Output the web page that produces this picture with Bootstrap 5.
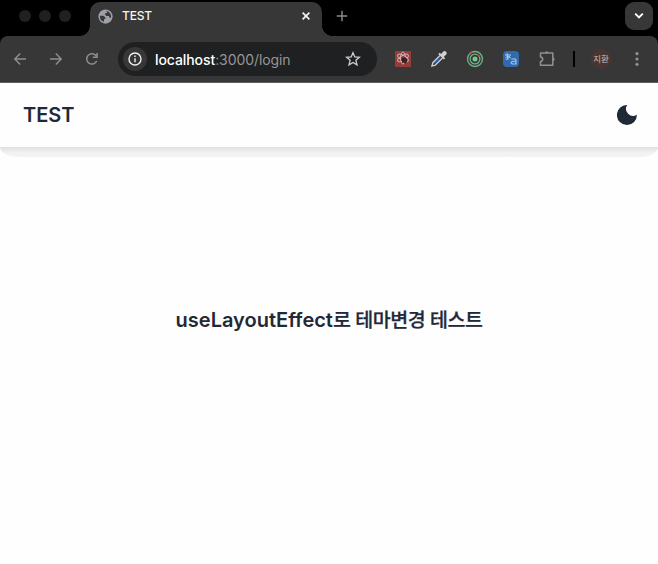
<!DOCTYPE html>
<html lang="ko">
<head>
<meta charset="utf-8">
<meta name="viewport" content="width=device-width, initial-scale=1">
<title>TEST</title>
<link href="https://cdn.jsdelivr.net/npm/bootstrap@5.3.0/dist/css/bootstrap.min.css" rel="stylesheet">
<script defer src="https://cdn.jsdelivr.net/npm/bootstrap@5.3.0/dist/js/bootstrap.bundle.min.js"></script>
<style>
body{height:564px;font-family:Inter,"Noto Sans CJK KR",sans-serif;color:#1f2937;background:#fefefe}
svg{display:block;flex:none}
.tabstrip{height:36px;background:#000;padding:2px 5px 0 19px}
.light{width:12px;height:12px;background:#202022}
.lights{gap:8px;width:71px;padding-top:8px}
.browser-tab{width:232px;height:34px;background:#373737;border-radius:10px 10px 0 0;padding:0 10px 6px 8px;color:#f4f4f4;font-size:12px;font-weight:500}
.browser-tab::before,.browser-tab::after{content:"";position:absolute;bottom:0;width:10px;height:10px}
.browser-tab::before{left:-10px;background:radial-gradient(circle at 0 0,#000 9.5px,#373737 10px)}
.browser-tab::after{right:-10px;background:radial-gradient(circle at 100% 0,#000 9.5px,#373737 10px)}
.tab-name{margin-left:9px;letter-spacing:-.15px}
.new-tab{margin:8px 0 0 14px}
.tab-search{width:28px;height:28px;border-radius:9px;background:#373737}
.toolbar-wrap{background:#000}
.toolbar{height:47px;background:#373737;border-bottom:1px solid #606060;border-radius:8px 8px 0 0;padding-left:12px;color:#8f8f8f}
.nav-icons{gap:20px;width:106px}
.address{width:259px;height:34px;border-radius:17px;background:#1f2022;padding:0 16px 0 5px;font-size:14px;color:#969696}
.info{width:24px;height:24px;background:#373737}
.url{margin-left:8px;letter-spacing:-.08px}
.url span{color:#fff;font-weight:500}
.extensions{gap:18px;margin-left:17px}
.divider{width:2px;height:16px;background:#000;margin-left:17px}
.avatar{width:20px;height:20px;background:#493632;color:#c7bfbc;font-size:8.5px;margin-left:16px}
.overflow-dots{margin-left:24px}
.site-header{height:64px;padding:0 21px 0 23px;background:#fefefe}
.brand{font-size:20px;font-weight:600;line-height:28px}
.header-shade{height:10px;border-radius:0 0 18px 18px/0 0 10px 10px;background:linear-gradient(#dfdfdf 0,#e6e6e6 20%,#eee 45%,#f2f2f2 60%,#f3f3f3 100%)}
.headline{font-size:20px;font-weight:600;line-height:28px;margin-top:149px;white-space:nowrap}
.hangul{font-family:"Noto Sans CJK KR",sans-serif;font-weight:500;font-size:19.5px;letter-spacing:-.5px;line-height:1;-webkit-text-stroke:.25px #1f2937}
</style>
</head>
<body class="overflow-hidden">
<div class="tabstrip d-flex align-items-start">
  <div class="lights d-flex"><i class="light rounded-circle"></i><i class="light rounded-circle"></i><i class="light rounded-circle"></i></div>
  <div class="browser-tab position-relative d-flex align-items-center">
    <svg width="15" height="15" viewBox="0 0 16 16"><circle cx="8" cy="8" r="7.6" fill="#9da1a7"/><path d="M2 7.2h3.5l2.3 1.7v1.5l-1.4.5v2.7C3.4 13 1.7 10.8 2 7.2zM9 2.1c2.5.4 4.7 2.6 5 5.3l-.2 2-1.6-.3-.6-1.6H9.1L7.4 6.2l.4-1.6 1.8-.4z" fill="#373737"/></svg>
    <span class="tab-name">TEST</span>
    <svg class="ms-auto" width="12" height="12" viewBox="0 0 12 12" stroke="#f4f4f4" stroke-width="1.7"><path d="M2.6 2.6l6.8 6.8M9.4 2.6L2.6 9.4"/></svg>
  </div>
  <svg class="new-tab" width="12" height="12" viewBox="0 0 12 12" stroke="#8c8c8c" stroke-width="1.4"><path d="M6 .8v10.4M.8 6h10.4"/></svg>
  <div class="tab-search ms-auto d-flex align-items-center justify-content-center"><svg width="10" height="8" viewBox="0 0 10 8" fill="none" stroke="#fff" stroke-width="1.9"><path d="M1.2 1.7L5 5.5l3.8-3.8"/></svg></div>
</div>
<div class="toolbar-wrap">
<div class="toolbar d-flex align-items-center">
  <div class="nav-icons d-flex">
    <svg width="16" height="16" viewBox="0 0 16 16" fill="none" stroke="currentColor" stroke-width="1.4"><path d="M14 8H3M8.2 2.6L2.8 8l5.4 5.4"/></svg>
    <svg width="16" height="16" viewBox="0 0 16 16" fill="none" stroke="currentColor" stroke-width="1.4"><path d="M2 8h11M7.8 2.6L13.2 8l-5.4 5.4"/></svg>
    <svg width="16" height="16" viewBox="0 0 16 16" fill="none" stroke="currentColor" stroke-width="1.5"><path d="M12.7 10A5.2 5.2 0 1 1 12.4 5.2"/><path d="M13.8 2v4.9H8.9V5.4h3.4V2z" fill="currentColor" stroke="none"/></svg>
  </div>
  <div class="address d-flex align-items-center">
    <div class="info rounded-circle d-flex align-items-center justify-content-center"><svg width="14" height="14" viewBox="0 0 14 14" fill="none" stroke="#f1f1f1" stroke-width="1.4"><circle cx="7" cy="7" r="6"/><path d="M7 6.2v4M7 3.6v1.5"/></svg></div>
    <div class="url"><span>localhost</span>:3000/login</div>
    <svg class="ms-auto" width="16" height="16" viewBox="0 0 16 16" fill="none" stroke="#cfcfcf" stroke-width="1.3"><path d="M8 1.7l1.8 4.2 4.6.4-3.5 3 1.1 4.5L8 11.4l-4 2.4 1.1-4.5-3.5-3 4.6-.4z"/></svg>
  </div>
  <div class="extensions d-flex">
    <svg width="18" height="18" viewBox="0 0 18 18"><path fill="#963c3b" d="M1 1h16v16H1z"/><g fill="none" stroke="#ceb1b0" stroke-width="1"><ellipse cx="9" cy="8" rx="2.5" ry="6"/><ellipse cx="9" cy="8" rx="2.5" ry="6" transform="rotate(60 9 8)"/><ellipse cx="9" cy="8" rx="2.5" ry="6" transform="rotate(120 9 8)"/></g><path fill="#3c1f20" d="M8 8l3-1 2 2v3l-2 2-1-2-2 1v-2l-1-1z"/></svg>
    <svg width="18" height="18" viewBox="0 0 18 18"><path d="M10 5.5l-7.2 7.2-.9 3.4 3.4-.9 7.2-7.2" fill="#3a455b" stroke="#cfcfcf" stroke-width="1.3"/><path d="M4.7 13.4l4.7-4.7" stroke="#2b68b8" stroke-width="1.7"/><path d="M8.3 4l1.3-1.3 1.5 1.4 2.2-2.5q1.5-1.1 2.8.2t.2 2.8l-2.5 2.2 1.4 1.5-1.3 1.3z" fill="#d2d2d2"/></svg>
    <svg width="18" height="18" viewBox="0 0 18 18" fill="none" stroke="#6eb488" stroke-width="1.3"><circle cx="9" cy="9" r="7.5"/><circle cx="9" cy="9" r="4.9"/><circle cx="9" cy="9" r="2.5" fill="#78c69a" stroke="none"/><path d="M3.7 2.5h2.6M11.2 4.7l2.7 1.9" stroke="#b44a3e" stroke-width="1.8"/></svg>
    <svg width="18" height="18" viewBox="0 0 18 18" fill="none"><rect x="1" y="1" width="16" height="16" rx="4" fill="#326bad"/><path d="M3 5h6M5 3l1 7M8 5.8L3.8 10M3.5 7.5q4-2 5.3 1" stroke="#b2cbe5"/><path d="M9.6 9.3q4.2-1.5 4.4 1V14H10.8q-2-.4-1.4-2 .8-1 4.3-.7" stroke="#a7c4e3" stroke-width="1.2"/></svg>
    <svg width="18" height="18" viewBox="0 0 18 18" fill="none" stroke="#909090" stroke-width="1.5"><path d="M2.5 7V3h12.3v12.2H2.5v-3.8q2.2-.2 2.2-2.2T2.5 7z" stroke-linejoin="round"/><path d="M7 3a1.7 1.8 0 0 1 3.4 0zM14.8 7.5a1.8 1.7 0 0 1 0 3.4z" fill="#909090" stroke="none"/></svg>
  </div>
  <div class="divider"></div>
  <div class="avatar rounded-circle d-flex align-items-center justify-content-center">지환</div>
  <svg class="overflow-dots" width="4" height="16" fill="#919191"><circle cx="2" cy="2.7" r="1.6"/><circle cx="2" cy="8" r="1.6"/><circle cx="2" cy="13.3" r="1.6"/></svg>
</div>
</div>
<header class="site-header d-flex align-items-center justify-content-between">
  <div class="brand">TEST</div>
  <svg width="20" height="20" viewBox="0 0 20 20" fill="#1f2937"><path d="M10.2 0a7 7 0 0 0 9.7 9.7A10 10 0 1 1 10.2 0z"/></svg>
</header>
<div class="header-shade"></div>
<main class="text-center"><h1 class="headline mb-0">useLayoutEffect<span class="hangul">로 테마변경 테스트</span></h1></main>
</body>
</html>
